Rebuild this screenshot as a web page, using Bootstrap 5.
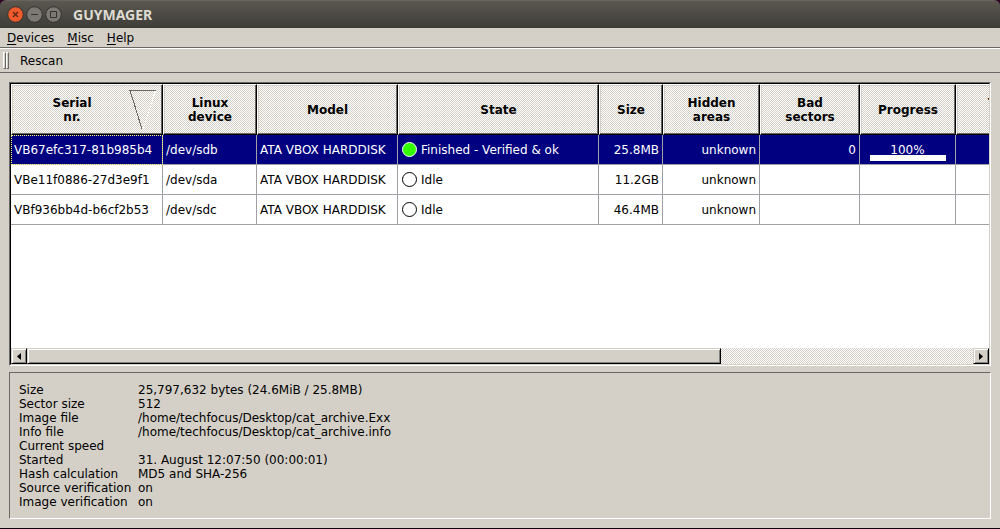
<!DOCTYPE html>
<html lang="en">
<head>
<meta charset="utf-8">
<meta name="viewport" content="width=device-width, initial-scale=1">
<title>GUYMAGER</title>
<link href="https://cdn.jsdelivr.net/npm/bootstrap@5.3.0/dist/css/bootstrap.min.css" rel="stylesheet">
<style>
:root{--face:#d4d0c8;--shade:#6a6864;--grid:#a0a0a4;--navy:#000080;
--dither:url("data:image/svg+xml,%3Csvg xmlns='http://www.w3.org/2000/svg' width='8' height='8' shape-rendering='crispEdges'%3E%3Cdefs%3E%3Cpattern id='p' width='2' height='2' patternUnits='userSpaceOnUse'%3E%3Cpath fill='%23fff' d='M0 0h2v2H0z'/%3E%3Cpath fill='%23d4d0c8' d='M1 0h1v1H1zM0 1h1v1H0z'/%3E%3C/pattern%3E%3C/defs%3E%3Cpath fill='url(%23p)' d='M0 0h8v8H0z'/%3E%3C/svg%3E")}
body{background:var(--face);color:#000;font:12px/14px "DejaVu Sans",sans-serif;border-bottom:1px solid #14000c}
.titlebar{height:28px;padding:0 7px;background:linear-gradient(#5a5850,#3d3c37);border-top:1px solid #66645c;border-radius:6px 6px 0 0;color:#dfdbd2}
.titlebar h1{font:bold 14px/20px "Noto Sans",sans-serif;margin-left:11px}
.title-wrap{background:#2c001e}
.win-set{gap:2px}
.win-btn{width:17px;height:17px;border:0;padding:0;background:none}
.win-btn svg{display:block}
.menus{height:20px;padding:0 7px;gap:13px;border-bottom:1px solid var(--shade)}
.menus a,.tools button{color:#000;text-decoration:none}
.menus u{text-underline-offset:2px;text-decoration-thickness:1px}
.tools{height:25px;padding:0 3px;border-top:1px solid #fff;border-bottom:1px solid var(--shade)}
.grip{width:3px;height:17px;border:1px solid;border-color:#fff var(--shade) var(--shade) #fff}
.tools button{border:0;background:none;padding:0;margin-left:11px}
.content{padding:9px 9px 9px;gap:6px}
.sunken{border:1px solid;border-color:var(--shade) #fff #fff var(--shade)}
.sunken-in{border:1px solid;border-color:#000 var(--face) var(--face) #000;background:#fff}
.devices{table-layout:fixed;width:1042px;border-collapse:separate;border-spacing:0}
.devices th{height:51px;padding:0 3px;text-align:center;vertical-align:middle;border:1px solid;border-color:#fff #000 #000 #fff;background:var(--dither);box-shadow:inset -1px -1px var(--shade),inset 1px 1px var(--face)}
.devices th.sorted{padding-right:5px}
.devices td{height:30px;padding:0 3px;border:solid var(--grid);border-width:0 1px 1px 0;white-space:nowrap;vertical-align:middle}
.devices .chosen td{background:var(--navy);color:#fff}
.devices .chosen td:first-child{outline:1px dotted #ffff7f;outline-offset:-1px}
.state{padding-left:1px;gap:4px}
.lamp{width:15px;height:15px;border:1px solid #000;border-radius:50%;background:#fff;flex:none}
.lamp.done{background:#3f0;border-color:#fff}
.devices .progress-cell{vertical-align:bottom;padding-bottom:3px}
.meter{height:6px;margin:-2px 6px 0 7px;background:#fff}
.scroller{height:16px;background:var(--dither)}
.raised{background:var(--face);border:1px solid;border-color:var(--face) #000 #000 var(--face);box-shadow:inset 1px 1px #fff,inset -1px -1px #808080;padding:0}
.arrow{width:16px;height:16px;flex:none}
.arrow svg{display:block;margin:auto}
.details{padding:10px 9px 9px;min-height:147px}
.details dl{display:grid;grid-template-columns:112px 1fr;column-gap:7px;margin:0}
.details dt{font-weight:normal;white-space:nowrap}
.details dd{margin:0;min-height:14px}
</style>
</head>
<body class="d-flex flex-column min-vh-100">
<header class="title-wrap">
<div class="titlebar d-flex align-items-center">
<div class="win-set d-flex">
<button class="win-btn" aria-label="Close"><svg width="17" height="17" viewBox="0 0 17 17"><circle cx="8.500" cy="8.500" r="7.800" fill="#ee5c2e" stroke="#33322d"/><path d="M6 6l5 5M11 6l-5 5" stroke="#5a2510" stroke-width="1.300"/></svg></button>
<button class="win-btn" aria-label="Minimise"><svg width="17" height="17" viewBox="0 0 17 17"><circle cx="8.500" cy="8.500" r="7.800" fill="#7b7971" stroke="#33322d"/><path d="M5 8.500h7" stroke="#33322d"/></svg></button>
<button class="win-btn" aria-label="Maximise"><svg width="17" height="17" viewBox="0 0 17 17"><circle cx="8.500" cy="8.500" r="7.800" fill="#7b7971" stroke="#33322d"/><path d="M5.500 5.500h6v6h-6z" fill="none" stroke="#33322d"/></svg></button>
</div>
<h1 class="mb-0">GUYMAGER</h1>
</div>
</header>
<nav class="menus d-flex align-items-center">
<a href="#"><u>D</u>evices</a><a href="#"><u>M</u>isc</a><a href="#"><u>H</u>elp</a>
</nav>
<div class="tools d-flex align-items-center"><span class="grip"></span><span class="grip"></span><button type="button">Rescan</button></div>
<main class="content d-flex flex-column flex-grow-1">
<section class="sunken d-flex flex-column flex-grow-1">
<div class="sunken-in d-flex flex-column flex-grow-1">
<div class="overflow-hidden flex-grow-1">
<table class="devices">
<colgroup><col style="width:152px"><col style="width:94px"><col style="width:141px"><col style="width:201px"><col style="width:64px"><col style="width:97px"><col style="width:100px"><col style="width:96px"><col style="width:97px"></colgroup>
<thead><tr>
<th class="sorted"><div class="d-flex align-items-center"><span class="flex-grow-1">Serial<br>nr.</span><svg width="28" height="40" viewBox="0 0 28 40" fill="none" shape-rendering="crispEdges"><path d="M26.500 1L14 39" stroke="#fff"/><path d="M27 .500H1L13 39" stroke="#6a6864"/></svg></div></th>
<th>Linux<br>device</th><th>Model</th><th>State</th><th>Size</th><th>Hidden<br>areas</th><th>Bad<br>sectors</th><th>Progress</th><th>Time<br>left</th></tr></thead>
<tbody>
<tr class="chosen"><td>VB67efc317-81b985b4</td><td>/dev/sdb</td><td>ATA VBOX HARDDISK</td><td><div class="state d-flex align-items-center"><span class="lamp done"></span>Finished - Verified &amp; ok</div></td><td class="text-end">25.8MB</td><td class="text-end">unknown</td><td class="text-end">0</td><td class="progress-cell text-center">100%<div class="meter"></div></td><td></td></tr>
<tr><td>VBe11f0886-27d3e9f1</td><td>/dev/sda</td><td>ATA VBOX HARDDISK</td><td><div class="state d-flex align-items-center"><span class="lamp"></span>Idle</div></td><td class="text-end">11.2GB</td><td class="text-end">unknown</td><td></td><td></td><td></td></tr>
<tr><td>VBf936bb4d-b6cf2b53</td><td>/dev/sdc</td><td>ATA VBOX HARDDISK</td><td><div class="state d-flex align-items-center"><span class="lamp"></span>Idle</div></td><td class="text-end">46.4MB</td><td class="text-end">unknown</td><td></td><td></td><td></td></tr>
</tbody>
</table>
</div>
<div class="scroller d-flex">
<button class="raised arrow" aria-label="Scroll left"><svg width="4" height="7" viewBox="0 0 4 7"><path d="M4 0v7L0 3.500z"/></svg></button>
<div class="flex-grow-1 d-flex"><div class="raised" style="width:73.4%"></div></div>
<button class="raised arrow" aria-label="Scroll right"><svg width="4" height="7" viewBox="0 0 4 7"><path d="M0 0v7l4-3.500z"/></svg></button>
</div>
</div>
</section>
<section class="sunken details">
<dl>
<dt>Size</dt><dd>25,797,632 bytes (24.6MiB / 25.8MB)</dd>
<dt>Sector size</dt><dd>512</dd>
<dt>Image file</dt><dd>/home/techfocus/Desktop/cat_archive.Exx</dd>
<dt>Info file</dt><dd>/home/techfocus/Desktop/cat_archive.info</dd>
<dt>Current speed</dt><dd></dd>
<dt>Started</dt><dd>31. August 12:07:50 (00:00:01)</dd>
<dt>Hash calculation</dt><dd>MD5 and SHA-256</dd>
<dt>Source verification</dt><dd>on</dd>
<dt>Image verification</dt><dd>on</dd>
</dl>
</section>
</main>
<script src="https://cdn.jsdelivr.net/npm/bootstrap@5.3.0/dist/js/bootstrap.bundle.min.js"></script>
</body>
</html>
